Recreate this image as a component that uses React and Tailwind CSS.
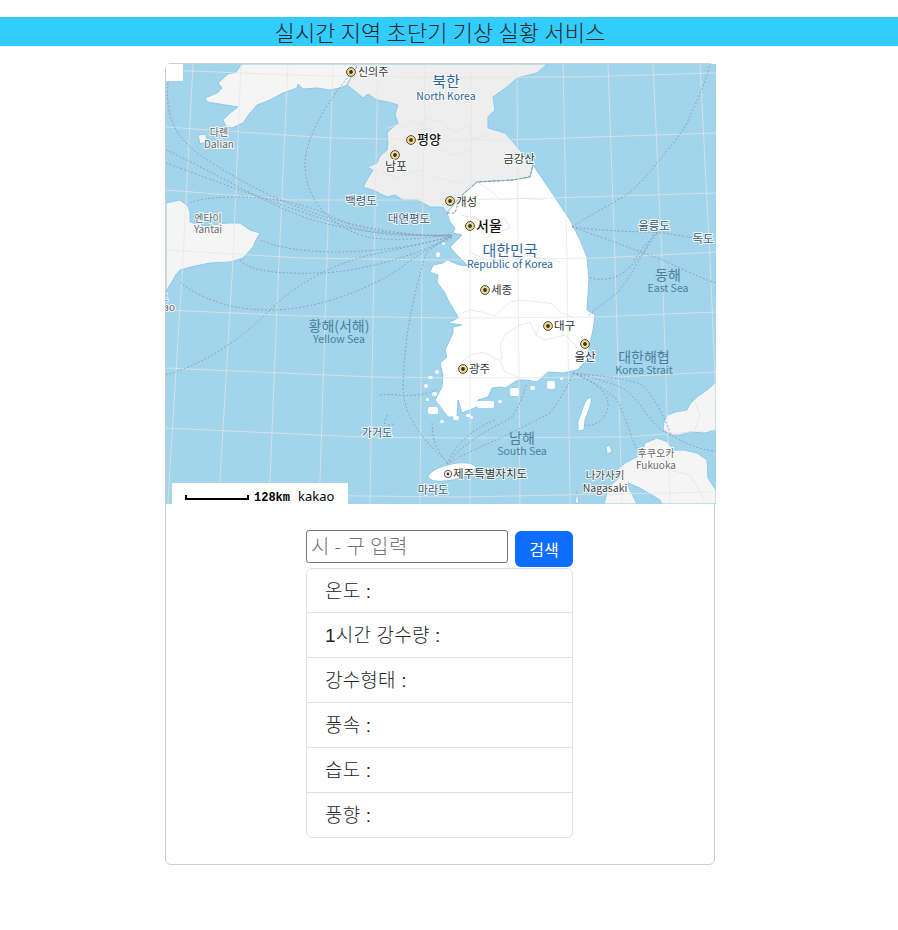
const cjk = '"Noto Sans CJK KR", "Noto Sans", sans-serif';

const rows = ["온도 :", "1시간 강수량 :", "강수형태 :", "풍속 :", "습도 :", "풍향 :"];

const gridLines = [
  "M193 64L183 260L170 467L168 504",
  "M241 64L233 260L220 480L218 504",
  "M288 64L279 260L270 480L268 504",
  "M333 64L327 260L320 480L318 504",
  "M378 64L374 260L370 504",
  "M425 64L422 260L420 504",
  "M472 64L470 260L470 504",
  "M517 64L518 260L520 504",
  "M563 64L567 260L570 504",
  "M608 64L615 260L622 504",
  "M653 64L662 260L670 504",
  "M700 64L710 260L716 400",
  "M166 70Q440 84 716 73",
  "M166 127L330 138L440 140L507 140L716 133",
  "M166 190L293 200L453 200L550 198L716 193",
  "M166 250L300 258L440 260L600 258L716 252",
  "M166 310L300 316L460 318L593 317L716 312",
  "M166 368L373 377L460 378L617 377L716 372",
  "M166 428L360 437L460 438L627 437L716 430",
  "M270 495L460 497L716 492",
];

const routes = [
  "M168 83C166 110 170 135 203 157C240 182 300 215 367 227C400 234 430 236 452 236",
  "M166 150C200 165 250 195 293 213C340 232 400 236 452 235",
  "M166 163C200 175 230 187 260 197C310 215 350 229 377 233C400 237 430 235 452 235",
  "M357 67C340 85 305 130 305 165C305 195 325 225 367 237C395 242 430 238 452 234",
  "M190 203C200 197 250 193 293 203C330 212 345 225 360 227C390 235 430 236 452 236",
  "M260 240C280 248 300 251 330 252C380 252 425 245 452 236",
  "M240 260C250 272 280 274 320 273C360 272 420 255 452 236",
  "M180 282C195 295 225 310 270 310C320 310 380 285 407 263C425 250 440 242 452 236",
  "M166 375C200 365 235 345 270 310C295 285 330 265 370 255C410 247 435 240 452 236",
  "M452 238C435 245 425 250 423 263C415 295 405 325 403 387C404 410 412 430 447 462",
  "M432 423C433 435 432 445 447 462",
  "M380 395C395 393 400 397 417 395C425 394 430 392 437 390",
  "M387 415L384 425M388 425L394 424",
  "M447 464C470 450 500 440 550 413C560 400 568 385 574 372",
  "M447 464C465 440 490 430 512 417C520 405 523 395 526 385",
  "M447 464C455 445 470 430 495 420",
  "M573 373C590 377 610 382 620 387C640 397 650 425 665 432C680 440 695 450 716 451",
  "M573 373C590 380 610 390 608 408C605 420 595 427 585 425",
  "M573 373C590 380 610 392 617 400C625 415 630 435 637 450",
  "M573 373C600 376 625 378 640 384C655 395 665 420 671 434",
  "M589 315C600 305 612 298 620 290C635 270 648 245 657 228",
  "M590 278C600 280 610 280 620 275C635 265 650 245 660 228",
  "M572 227C590 215 605 208 623 197C640 185 650 172 657 163C672 145 680 135 687 123C695 105 705 85 710 64",
  "M572 227C600 230 630 232 650 232C665 233 680 235 692 238",
  "M572 227C610 240 640 252 663 260C680 268 700 278 716 283",
  "M657 233C650 240 640 250 633 262",
];

const borders = [
  "M348 86L358 64",
  "M398 105L410 120L420 125L426 118L440 122L455 132L470 126L472 140L490 134",
  "M388 128L400 124L412 132L430 128L438 150L455 155L470 150",
  "M382 172L398 178L420 170L440 178L462 184",
  "M477 182L490 190L500 200L520 198L545 200",
  "M462 215L485 222L505 218L510 228L490 236",
  "M470 252L490 262L520 254L560 262",
  "M457 315L470 310L482 312L495 316L510 302L520 300L540 302L553 304L560 312L574 318",
  "M518 326L505 335L500 345L502 358L498 360L484 352L470 355L458 365L456 372",
  "M540 325L536 335L545 340L565 335L575 345L578 352",
  "M518 326L530 322L536 335",
  "M500 360L505 372L521 378",
  "M660 450L670 470L690 475L705 500",
  "M695 402L700 415L695 430",
];

const specks = [
  [428, 407, 10, 7],
  [477, 401, 17, 7],
  [510, 388, 9, 8],
  [547, 381, 8, 8],
  [453, 416, 6, 4],
  [435, 370, 4, 4],
  [428, 376, 5, 3],
  [424, 384, 4, 4],
  [432, 392, 5, 4],
  [426, 398, 3, 3],
  [466, 414, 5, 3],
  [498, 400, 4, 3],
  [530, 386, 5, 4],
  [560, 377, 3, 3],
  [440, 420, 4, 3],
  [470, 416, 3, 3],
  [436, 252, 4, 5],
  [442, 242, 3, 3],
];

const markers = [
  [351, 72],
  [411, 140],
  [395, 155],
  [450, 201],
  [470, 226],
  [485, 290],
  [548, 326],
  [585, 344],
  [463, 369],
];

// x, baseline, text, size, colour, anchor, weight
const labels = [
  [358, 76, "신의주", 11, "#333", "start"],
  [446, 87, "북한", 15, "#2c659c", "middle"],
  [446, 100, "North Korea", 10.5, "#2c659c", "middle"],
  [417, 144, "평양", 13, "#111", "start", 500],
  [396, 171, "남포", 12, "#333", "middle"],
  [519, 163, "금강산", 11.5, "#1c3a1c", "middle"],
  [456, 206, "개성", 11.5, "#333", "start"],
  [476, 231, "서울", 14, "#111", "start", 500],
  [361, 205, "백령도", 11.5, "#3f5a70", "middle"],
  [409, 223, "대연평도", 11.5, "#3f5a70", "middle"],
  [219, 136, "다롄", 10, "#666", "middle"],
  [219, 148, "Dalian", 10, "#666", "middle"],
  [208, 222, "엔타이", 10, "#666", "middle"],
  [208, 233, "Yantai", 10, "#666", "middle"],
  [510, 256, "대한민국", 15, "#2c659c", "middle"],
  [510, 268, "Republic of Korea", 10.5, "#2c659c", "middle"],
  [654, 230, "울릉도", 11.5, "#3f5a70", "middle"],
  [703, 243, "독도", 11.5, "#3f5a70", "middle"],
  [668, 280, "동해", 14, "#4b7f9b", "middle", 400, true],
  [668, 292, "East Sea", 10.5, "#4b7f9b", "middle", 400, true],
  [491, 294, "세종", 11.5, "#333", "start"],
  [554, 330, "대구", 11.5, "#333", "start"],
  [585, 361, "울산", 11.5, "#333", "middle"],
  [644, 362, "대한해협", 14, "#4b7f9b", "middle", 400, true],
  [644, 374, "Korea Strait", 10.5, "#4b7f9b", "middle", 400, true],
  [339, 331, "황해(서해)", 14, "#4b7f9b", "middle", 400, true],
  [339, 343, "Yellow Sea", 10.5, "#4b7f9b", "middle", 400, true],
  [469, 373, "광주", 11.5, "#333", "start"],
  [377, 437, "가거도", 11, "#3f5a70", "middle"],
  [522, 443, "남해", 14, "#4b7f9b", "middle", 400, true],
  [522, 455, "South Sea", 10.5, "#4b7f9b", "middle", 400, true],
  [453, 478, "제주특별자치도", 11.5, "#333", "start"],
  [433, 494, "마라도", 11, "#3f5a70", "middle"],
  [605, 479, "나가사키", 10.5, "#444", "middle"],
  [605, 492, "Nagasaki", 10.5, "#444", "middle"],
  [656, 457, "후쿠오카", 10, "#666", "middle"],
  [656, 469, "Fukuoka", 10, "#666", "middle"],
  [175, 311, "ao", 10, "#666", "end"],
  [168, 301, "오", 10, "#666", "end"],
];

const KoreaMap = () => (
  <svg viewBox="166 64 550 440" width="550" height="440" className="block">
    <rect x="166" y="64" width="550" height="440" fill="#a2d5ec" />
    <g stroke="#8ccbe8" strokeWidth="1">
      {/* china */}
      <path
        fill="#f5f5f5"
        d="M242 64L236 72L228 74L218 83L222 88L217 93L205 98L207 102L238 107L230 113L223 120L226 126L232 128L243 123L250 113L257 105L270 100L283 93L297 88L298 84L303 89L317 88L330 90L340 88L347 85L358 64Z"
      />
      <path fill="#f5f5f5" d="M198 135L206 134L207 142L200 144Z" />
      <path
        fill="#f5f5f5"
        d="M166 203L180 200L188 206L190 213L190 222L205 226L227 223L240 223L250 230L260 233L256 240L253 247L243 258L230 262L210 263L195 266L180 270L175 276L173 280L168 288L166 292Z"
      />
      {/* north korea */}
      <path
        fill="#eeeeee"
        d="M358 64L347 85L356 92L363 98L368 94L377 100L388 102L398 105L395 115L398 123L392 128L387 133L388 142L387 150L380 156L377 163L367 167L373 170L368 178L363 187L375 191L387 197L395 195L403 200L417 200L425 204L430 207L443 207L447 213L460 197L477 182L513 180L530 177L533 165L518 148L505 133L488 128L488 117L495 110L493 97L507 87L517 78L537 73L547 64Z"
      />
      {/* south korea */}
      <path
        fill="#ffffff"
        d="M447 213L460 197L477 182L513 180L530 177L533 165L550 190L570 220L580 240L587 257L589 280L587 310L595 315L593 330L590 343L587 360L577 370L563 373L548 372L537 382L526 380L518 380L505 388L500 387L492 388L488 397L478 400L477 407L462 413L458 400L457 417L448 417L435 400L442 387L443 375L440 363L447 357L445 350L453 333L453 327L462 325L448 323L458 318L457 315L448 300L445 293L437 282L438 275L430 272L433 265L443 263L447 260L460 265L468 266L462 260L455 253L450 247L455 242L462 235L453 233L455 228L450 222Z"
      />
      {/* jeju */}
      <ellipse cx="452" cy="472" rx="24" ry="8" transform="rotate(-12 452 472)" fill="#ffffff" />
      {/* tsushima */}
      <path fill="#ffffff" d="M592 397L590 407L585 420L584 430L578 431L578 422L583 407L587 399Z" />
      {/* japan */}
      <path
        fill="#f5f5f5"
        d="M716 382L707 390L697 397L690 404L687 410L675 412L667 415L664 422L663 430L672 435L680 435L690 432L705 433L716 430Z"
      />
      <path
        fill="#f5f5f5"
        d="M657 438L650 441L645 443L642 452L637 457L625 463L617 470L620 477L612 484L607 493L604 504L637 504L630 490L628 483L640 488L660 500L662 504L716 504V490L708 478L707 460L697 453L684 450L673 450L668 442Z"
      />
      <path fill="#f5f5f5" d="M606 447L610 445L612 452L607 454Z" />
      <path fill="#f5f5f5" d="M575 503L577 491L579 503Z" />
    </g>
    <g fill="#ffffff">
      {specks.map(([x, y, w, h]) => (
        <rect key={`${x}-${y}`} x={x} y={y} width={w} height={h} rx="2" />
      ))}
    </g>
    <g fill="none" stroke="#e4e4e4" strokeWidth="0.8">
      {borders.map((d) => (
        <path key={d} d={d} />
      ))}
    </g>
    <path
      d="M447 213L455 213L460 197L477 182L513 180L530 177L533 165"
      fill="none"
      stroke="#888"
      strokeWidth="0.9"
      strokeDasharray="3 1.5"
    />
    <g fill="none" stroke="#e6e6e6" strokeOpacity="0.7" strokeWidth="1">
      {gridLines.map((d) => (
        <path key={d} d={d} />
      ))}
    </g>
    <g fill="none" stroke="#8b9bb2" strokeWidth="0.9" strokeDasharray="1.8 2">
      {routes.map((d) => (
        <path key={d} d={d} />
      ))}
    </g>
    {markers.map(([x, y]) => (
      <g key={x}>
        <circle cx={x} cy={y} r="4.4" fill="#f7dc87" stroke="#4a4a44" strokeWidth="1" />
        <circle cx={x} cy={y} r="1.9" fill="#333" />
      </g>
    ))}
    <circle cx="448" cy="474" r="3.6" fill="#fff" stroke="#444" strokeWidth="0.9" />
    <circle cx="448" cy="474" r="1.4" fill="#333" />
    <g style={{ fontFamily: cjk }}>
      {labels.map(([x, y, text, size, fill, anchor, weight, plain]) => (
        <text
          key={text}
          x={x}
          y={y}
          fontSize={size}
          fill={fill}
          fontWeight={weight || 400}
          textAnchor={anchor}
          stroke={plain ? "none" : "#ffffff"}
          strokeOpacity="0.85"
          strokeWidth="2"
          paintOrder="stroke"
        >
          {text}
        </text>
      ))}
    </g>
  </svg>
);

const App = () => {
  return (
    <div className="min-h-[930px] bg-white pt-[17px] font-['Liberation_Sans','Noto_Sans_CJK_KR',sans-serif] text-[#212529]">
      <div className="h-[29px] bg-[#33ccff]">
        <div className="w-[880px] text-center text-[22px] leading-[29px] tracking-[0.15px] font-['Noto_Sans_CJK_KR',sans-serif] font-light">
          실시간 지역 초단기 기상 실황 서비스
        </div>
      </div>
      <div className="w-[880px] pt-[17px]">
        <div className="mx-auto w-[550px] rounded-md border border-[#cfcfcf] pb-[26px]">
          <div className="relative h-[440px] w-[550px]">
            <KoreaMap />
            <div className="absolute left-0 top-0 h-[17px] w-[17px] bg-white" />
            <div className="absolute bottom-0 left-[6px] flex h-[21px] w-[176px] items-end overflow-hidden bg-white">
              <div className="mb-[4px] ml-[13px] h-[5px] w-[64px] border-x-2 border-b-2 border-black" />
              <span className="ml-[5px] text-xs leading-[12px] font-bold font-['Liberation_Mono',monospace] text-black">
                128km
              </span>
              <span className="ml-[8px] text-[13px] leading-[16px] font-['Noto_Sans',sans-serif] text-black">
                kakao
              </span>
            </div>
          </div>
          <div className="ml-[140px] mt-[26px] w-[267px]">
            <div className="flex items-start justify-between">
              <input
                placeholder="시 - 구 입력"
                className="h-[33px] w-[202px] rounded-[3px] border border-[#767676] pb-[2px] px-1 text-xl font-light font-['Noto_Sans_CJK_KR',sans-serif] placeholder:text-[#757575] tracking-[0.4px] outline-none"
              />
              <button className="mt-px h-[36px] w-[58px] rounded-md bg-[#0d6efd] text-base text-white font-['Noto_Sans_CJK_KR',sans-serif]">
                검색
              </button>
            </div>
            <ul className="mt-px overflow-hidden rounded-md border border-[#dee2e6]">
              {rows.map((row) => (
                <li
                  key={row}
                  className="h-[45px] border-b border-[#dee2e6] px-[18px] pt-px text-[19px] tracking-[0.2px] leading-[44px] first:h-[44px] last:h-[44px] last:border-b-0 font-light"
                >
                  {row}
                </li>
              ))}
            </ul>
          </div>
        </div>
      </div>
    </div>
  );
};

export default App;
